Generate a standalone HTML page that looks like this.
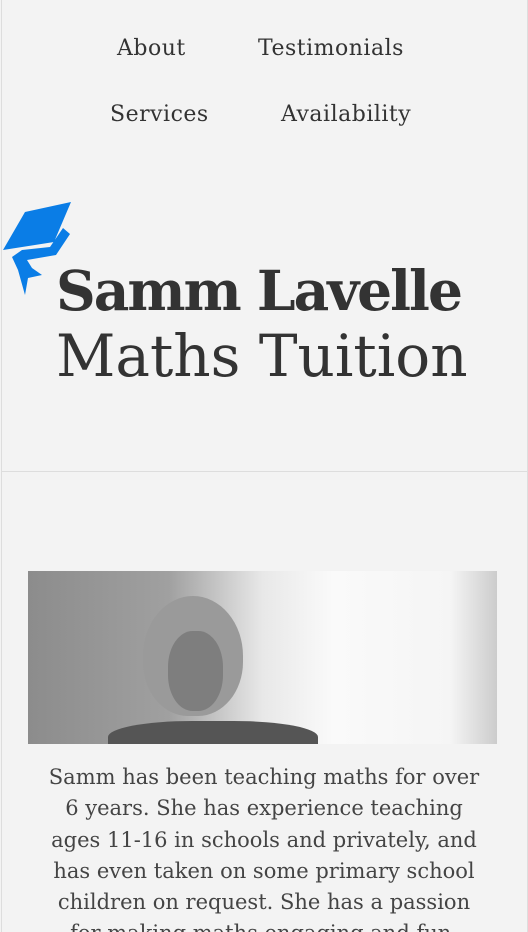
<!DOCTYPE html>
<html><head><meta charset="utf-8"><style>
html,body{margin:0;padding:0;width:528px;height:932px;overflow:hidden}
body{background:#f3f3f3;font-family:"DejaVu Serif","Liberation Serif",serif;color:#333;position:relative}
.frame{position:absolute;left:1px;top:0;width:525px;height:932px;border-left:1px solid #ddd;border-right:1px solid #ddd}
.nav a{position:absolute;font-size:22px;color:#333;text-decoration:none;letter-spacing:.5px}
.hr{position:absolute;left:1px;right:1px;top:471px;border-top:1px solid #ddd}
h1{position:absolute;left:56px;top:257px;margin:0;font-size:55px;line-height:68px;font-weight:bold;letter-spacing:-2px;white-space:nowrap}
h2{position:absolute;left:56px;top:322px;margin:0;font-size:58px;line-height:68px;font-weight:normal;letter-spacing:0px;white-space:nowrap}
.photo{position:absolute;left:28px;top:571px;width:469px;height:173px;background:linear-gradient(90deg,#8c8c8c 0%,#a0a0a0 30%,#e8e8e8 50%,#fafafa 65%,#f5f5f5 90%,#ccc 100%);overflow:hidden}
p{position:absolute;left:40px;width:448px;top:762px;margin:0;text-align:center;font-size:21px;line-height:31.3px;font-weight:300;color:#444}
</style></head><body>
<div class="frame"></div>
<div class="nav"><a style="left:117px;top:36px">About</a><a style="left:258px;top:36px">Testimonials</a><a style="left:110px;top:102px">Services</a><a style="left:281px;top:102px">Availability</a></div>
<svg style="position:absolute;left:0;top:198px" width="80" height="100" viewBox="0 198 80 100"><path fill="#0a7de6" d="M25 212 L71 202 L54 242 L3 250 Z M63 228 L70 234 L56 255 L27 260 L32 268 L42 275 L28 278 L25 295 L18 270 L12 257 L22 250 L50 247 Z"/></svg>
<h1>Samm Lavelle</h1>
<h2>Maths Tuition</h2>
<div class="hr"></div>
<div class="photo">
<div style="position:absolute;left:115px;top:25px;width:100px;height:120px;border-radius:50% 50% 45% 45%;background:#9a9a9a"></div>
<div style="position:absolute;left:140px;top:60px;width:55px;height:80px;border-radius:45%;background:#7e7e7e"></div>
<div style="position:absolute;left:80px;top:150px;width:210px;height:40px;border-radius:40% 40% 0 0;background:#555"></div>
</div>
<p>Samm has been teaching maths for over 6 years. She has experience teaching ages 11-16 in schools and privately, and has even taken on some primary school children on request. She has a passion for making maths engaging and fun.</p>
</body></html>
